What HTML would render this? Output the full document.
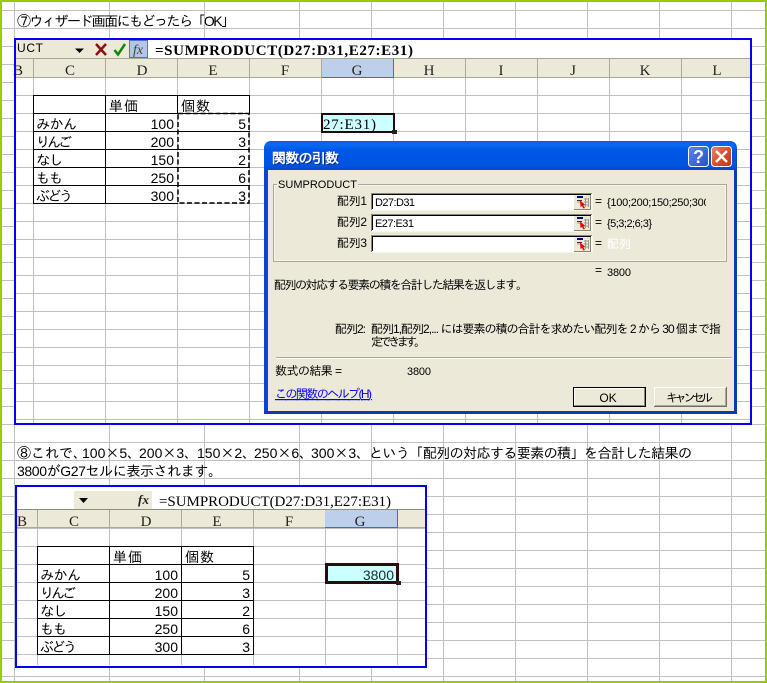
<!DOCTYPE html>
<html lang="ja">
<head>
<meta charset="utf-8">
<title>SUMPRODUCT</title>
<style>
html,body{margin:0;padding:0;background:#fff;width:767px;height:683px;overflow:hidden}
svg{display:block}
text{font-family:"Liberation Sans","IPAGothic","Noto Sans CJK JP",sans-serif;font-size:14px;fill:#000;dominant-baseline:auto}
.d{font-size:12px}
.l{font-size:11px}
.t{font-size:14px}
.s{font-family:"Liberation Serif","IPAGothic",serif}
.h{font-family:"Liberation Serif",serif;font-size:15px;text-anchor:middle;fill:#222}
.r{text-anchor:end}
.c{shape-rendering:crispEdges}
.w{font-family:"IPAGothic","Noto Sans CJK JP",sans-serif}
</style>
</head>
<body>
<svg xmlns="http://www.w3.org/2000/svg" width="767" height="683" viewBox="0 0 767 683">
<defs>
<pattern id="hl" patternUnits="userSpaceOnUse" x="0" y="10" width="10" height="18"><rect width="10" height="1" fill="#c0c0c0"/></pattern>
<pattern id="hl2" patternUnits="userSpaceOnUse" x="0" y="5" width="10" height="18"><rect width="10" height="1" fill="#c0c0c0"/></pattern>
<pattern id="hl3" patternUnits="userSpaceOnUse" x="0" y="6" width="10" height="18"><rect width="10" height="1" fill="#c0c0c0"/></pattern>
<linearGradient id="tb" x1="0" y1="0" x2="0" y2="1"><stop offset="0" stop-color="#0a5be0"/><stop offset=".12" stop-color="#0a6af0"/><stop offset=".3" stop-color="#0058e8"/><stop offset=".85" stop-color="#0054e0"/><stop offset="1" stop-color="#0048c8"/></linearGradient>
<linearGradient id="hb" x1="0" y1="0" x2="1" y2="1"><stop offset="0" stop-color="#5a86ee"/><stop offset="1" stop-color="#2450c8"/></linearGradient>
<linearGradient id="xb" x1="0" y1="0" x2="1" y2="1"><stop offset="0" stop-color="#e88a68"/><stop offset=".5" stop-color="#d8502c"/><stop offset="1" stop-color="#b83810"/></linearGradient>
<symbol id="ref" viewBox="0 0 17 15" width="17" height="15">
<rect width="17" height="15" fill="#ece9d8"/>
<path d="M0 14.500H17M16.500 0V15" stroke="#8a8674" fill="none"/>
<path d="M3 2H9" stroke="#00007a" stroke-width="2"/>
<path d="M3 7H8M10 4H14M10 7H14M10 10H14M11.500 3V12M14.500 3V12" stroke="#9a9a90" fill="none"/>
<path d="M3 5.500H8" stroke="#333"/>
<path d="M6 5.500L11 9.500L9.500 10.500L11 13L9.500 13.500L8 11L6.500 12Z" fill="#f00000"/>
</symbol>
</defs>

<!-- page background grid -->
<rect x="2" y="10" width="763" height="667" fill="url(#hl)" class="c"/>
<path class="c" d="M14.500 2V681M109.500 2V681M204.500 2V681M299.500 2V681M371.500 2V681M443.500 2V681M515.500 2V681M587.500 2V681M659.500 2V681M731.500 2V681" stroke="#c0c0c0" fill="none"/>
<rect x="0" y="0" width="767" height="2" fill="#99cc00" class="c"/>
<rect x="0" y="0" width="2" height="683" fill="#99cc00" class="c"/>
<rect x="765" y="0" width="2" height="683" fill="#99cc00" class="c"/>
<rect x="0" y="681" width="767" height="2" fill="#99cc00" class="c"/>

<text x="17" y="26" class="t" textLength="218">⑦ウィザード画面にもどったら「OK」</text>

<!-- BOX 1 -->
<rect x="15" y="39" width="736" height="385" fill="#fff" class="c"/>
<rect x="16" y="78" width="734" height="345" fill="url(#hl2)" class="c"/>
<path class="c" d="M33.500 78V423M105.500 78V423M177.500 78V423M249.500 78V423M321.500 78V423M393.500 78V423M465.500 78V423M537.500 78V423M609.500 78V423M681.500 78V423" stroke="#c0c0c0" fill="none"/>
<!-- formula bar -->
<rect x="16" y="40" width="734" height="18" fill="#ece9d8" class="c"/>
<rect x="148" y="40" width="602" height="18" fill="#fff" class="c"/>
<rect x="16" y="58" width="734" height="1" fill="#a8a595" class="c"/>
<text x="17" y="52" style="font-size:12px" textLength="26">UCT</text>
<path d="M75 48.500H84L79.500 53Z" fill="#000"/>
<path d="M96 44L106 55M106 44L96 55" stroke="#8c1010" stroke-width="2.500" fill="none"/>
<path d="M114.500 50L118 54.500L125 44" stroke="#0a8a0a" stroke-width="2.500" fill="none"/>
<rect x="129.500" y="40.500" width="18" height="17" fill="#b4c6e6" stroke="#4a78c8" class="c"/>
<text x="133" y="54" class="s" style="font-size:14px;font-style:italic;fill:#444">fx</text>
<text x="155" y="55" class="s" style="font-size:15px;font-weight:bold" textLength="258">=SUMPRODUCT(D27:D31,E27:E31)</text>
<!-- col header -->
<rect x="16" y="59" width="734" height="19" fill="#ece9d8" class="c"/>
<rect x="321" y="59" width="73" height="19" fill="#bdcfea" class="c"/>
<path class="c" d="M321 77.500H394M393.500 59V78" stroke="#3a6fc4" fill="none"/>
<path class="c" d="M16 77.500H321M394 77.500H750M33.500 59V78M105.500 59V78M177.500 59V78M249.500 59V78M321.500 59V78M465.500 59V78M537.500 59V78M609.500 59V78M681.500 59V78" stroke="#aca899" fill="none"/>
<text class="h" x="18" y="75">B</text><text class="h" x="70" y="75">C</text><text class="h" x="142" y="75">D</text><text class="h" x="213" y="75">E</text><text class="h" x="285" y="75">F</text><text class="h" x="357" y="75">G</text><text class="h" x="429" y="75">H</text><text class="h" x="501" y="75">I</text><text class="h" x="573" y="75">J</text><text class="h" x="645" y="75">K</text><text class="h" x="717" y="75">L</text>
<!-- table 1 -->
<path class="c" d="M33 95.500H250M33 113.500H250M33 131.500H250M33 149.500H250M33 167.500H250M33 185.500H178M33 203.500H178M33.500 95V204M105.500 95V204M177.500 95V114M249.500 95V114" stroke="#000" fill="none"/>
<path class="c" d="M178 185.500H250" stroke="#000" fill="none"/>
<rect x="178" y="113.500" width="71" height="89.500" fill="none" stroke="#000" stroke-width="1.500" stroke-dasharray="5 2.500"/>
<g>
<text x="109" y="111" textLength="29">単価</text><text x="181" y="111" textLength="29">個数</text>
<text x="36" y="129" textLength="41">みかん</text><text x="36" y="147" textLength="36">りんご</text><text x="36" y="165" textLength="27">なし</text><text x="36" y="183" textLength="27">もも</text><text x="36" y="201" textLength="37">ぶどう</text>
<text class="r" x="174" y="129">100</text><text class="r" x="174" y="147">200</text><text class="r" x="174" y="165">150</text><text class="r" x="174" y="183">250</text><text class="r" x="174" y="201">300</text>
<text class="r" x="246" y="129">5</text><text class="r" x="246" y="147">3</text><text class="r" x="246" y="165">2</text><text class="r" x="246" y="183">6</text><text class="r" x="246" y="201">3</text>
</g>
<rect x="322" y="114" width="72" height="18" fill="#ccffff" stroke="#200808" stroke-width="2" class="c"/>
<rect x="392" y="130" width="5" height="4" fill="#222" class="c"/>
<text x="323" y="129" class="s" style="font-size:15px" textLength="53">27:E31)</text>

<!-- blue frame 1 -->
<rect x="15" y="39" width="736" height="385" fill="none" stroke="#0000ff" stroke-width="2" class="c"/>

<!-- DIALOG -->
<path d="M264 414V149Q264 141 272 141H729Q737 141 737 149V414Z" fill="#0848d0"/>
<path d="M733 170H737V414H264V411H733Z" fill="#0a3cb0"/>
<path d="M264 170V149Q264 141 272 141H729Q736 141 736 149V170Z" fill="url(#tb)"/>
<rect x="268" y="170" width="466" height="241" fill="#ece9d8" class="c"/>
<text x="272" y="163" style="font-size:14px;font-weight:bold;fill:#0a2a90" textLength="67" transform="translate(1 1)">関数の引数</text>
<text x="272" y="163" style="font-size:14px;font-weight:bold;fill:#fff" textLength="67">関数の引数</text>
<rect x="688.500" y="146.500" width="20" height="20" rx="3" fill="url(#hb)" stroke="#fff"/>
<text x="698.500" y="163" style="font-size:18px;font-weight:bold;fill:#fff;text-anchor:middle">?</text>
<rect x="711.500" y="146.500" width="20" height="20" rx="3" fill="url(#xb)" stroke="#fff"/>
<path d="M716 151L727 162M727 151L716 162" stroke="#fff" stroke-width="2.500" fill="none"/>

<!-- group box -->
<rect x="273.500" y="184.500" width="453" height="77" fill="none" stroke="#aca899" class="c"/>
<rect x="274.500" y="185.500" width="451" height="75" fill="none" stroke="#f6f4ec" class="c"/>
<rect x="277" y="178" width="81" height="10" fill="#ece9d8" class="c"/>
<text x="278" y="188" class="l" textLength="79">SUMPRODUCT</text>

<text x="337" y="205" class="d" textLength="30">配列1</text>
<text x="337" y="226" class="d" textLength="30">配列2</text>
<text x="337" y="247" class="d" textLength="30">配列3</text>

<g class="c">
<rect x="371.500" y="193.500" width="221" height="17" fill="#fff" stroke="#f6f4ec"/><path d="M371.500 210V193.500H592" stroke="#8a8674" fill="none"/><path d="M372.500 209V194.500H591" stroke="#000" fill="none"/>
<rect x="371.500" y="214.500" width="221" height="17" fill="#fff" stroke="#f6f4ec"/><path d="M371.500 231V214.500H592" stroke="#8a8674" fill="none"/><path d="M372.500 230V215.500H591" stroke="#000" fill="none"/>
<rect x="371.500" y="235.500" width="221" height="17" fill="#fff" stroke="#f6f4ec"/><path d="M371.500 252V235.500H592" stroke="#8a8674" fill="none"/><path d="M372.500 251V236.500H591" stroke="#000" fill="none"/>
</g>
<use href="#ref" x="574" y="195"/><use href="#ref" x="574" y="216"/><use href="#ref" x="574" y="237"/>
<text x="375" y="206" class="l" textLength="40">D27:D31</text>
<text x="375" y="227" class="l" textLength="39">E27:E31</text>

<text x="595" y="205" class="d">=</text><text x="595" y="226" class="d">=</text><text x="595" y="247" class="d">=</text><text x="595" y="274" class="d">=</text>
<svg x="607" y="190" width="99" height="22"><text x="0" y="16" class="l" textLength="106">{100;200;150;250;300}</text></svg>
<text x="607" y="227" class="l" textLength="45">{5;3;2;6;3}</text>
<text x="607" y="248" class="d" style="fill:#fff" textLength="24">配列</text>
<text x="607" y="276" class="l" textLength="24">3800</text>

<text x="274" y="289" class="d" textLength="254">配列の対応する要素の積を合計した結果を返します。</text>
<text x="335" y="333" class="d" textLength="31">配列2:</text>
<text x="371" y="333" class="d" textLength="350">配列1,配列2,... には要素の積の合計を求めたい配列を 2 から 30 個まで指</text>
<text x="371" y="346" class="d" textLength="55">定できます。</text>
<path class="c" d="M276 357.500H732" stroke="#aca899"/><path class="c" d="M276 358.500H732" stroke="#fff"/>
<text x="275" y="375" class="d" textLength="67">数式の結果 =</text>
<text x="407" y="375" class="l" textLength="24">3800</text>
<text x="275" y="398" class="d" style="fill:#0000ff;text-decoration:underline" textLength="97">この関数のヘルプ(H)</text>

<g class="c">
<rect x="573.500" y="387.500" width="72" height="19" fill="#ece9d8" stroke="#000"/>
<path d="M574.500 405V388.500H645" stroke="#fff" fill="none"/><path d="M574.500 405.500H644.500V388" stroke="#8a8674" fill="none"/>
<rect x="654" y="387" width="73" height="20" fill="#ece9d8"/>
<path d="M654.500 406V387.500H727" stroke="#fff" fill="none"/><path d="M654 406.500H726.500V387" stroke="#716f64" fill="none"/><path d="M655 405.500H725.500V388" stroke="#aca899" fill="none"/>
</g>
<text x="608" y="402" class="d" style="text-anchor:middle">OK</text>
<text x="666" y="402" class="d" textLength="47">キャンセル</text>

<!-- step 8 text -->
<text y="458" class="t"><tspan x="17">⑧これで、</tspan><tspan x="82">100<tspan class="w">×</tspan>5、</tspan><tspan x="139">200<tspan class="w">×</tspan>3、</tspan><tspan x="197">150<tspan class="w">×</tspan>2、</tspan><tspan x="254">250<tspan class="w">×</tspan>6、</tspan><tspan x="311">300<tspan class="w">×</tspan>3、</tspan></text>
<text x="369" y="458" class="t" textLength="323">という「配列の対応する要素の積」を合計した結果の</text>
<text x="17" y="476" class="t" textLength="205">3800がG27セルに表示されます。</text>

<!-- BOX 2 -->
<rect x="16" y="486" width="410" height="181" fill="#fff" class="c"/>
<rect x="17" y="528" width="408" height="137" fill="url(#hl3)" class="c"/>
<path class="c" d="M37.500 528V665M109.500 528V665M181.500 528V665M253.500 528V665M325.500 528V665M397.500 528V665" stroke="#c0c0c0" fill="none"/>
<rect x="74" y="491" width="78" height="18" fill="#ece9d8" class="c"/>
<path d="M79 498H88L83.500 503Z" fill="#000"/>
<text x="138" y="504" class="s" style="font-size:13px;font-style:italic;font-weight:bold;fill:#222" textLength="11">fx</text>
<text x="159" y="506" class="s" style="font-size:15px" textLength="232">=SUMPRODUCT(D27:D31,E27:E31)</text>
<rect x="17" y="509" width="408" height="1" fill="#8f8d80" class="c"/>
<rect x="17" y="510" width="408" height="18" fill="#ece9d8" class="c"/>
<rect x="325" y="510" width="73" height="18" fill="#bdcfea" class="c"/>
<path class="c" d="M17 527.500H325M398 527.500H425M37.500 510V528M109.500 510V528M181.500 510V528M253.500 510V528" stroke="#aca899" fill="none"/>
<path class="c" d="M325 527.500H398M397.500 510V528" stroke="#3a6fc4" fill="none"/>
<text class="h" x="22" y="526">B</text><text class="h" x="74" y="526">C</text><text class="h" x="146" y="526">D</text><text class="h" x="217" y="526">E</text><text class="h" x="289" y="526">F</text><text class="h" x="360" y="526">G</text>
<path class="c" d="M37 546.500H254M37 564.500H254M37 582.500H254M37 600.500H254M37 618.500H254M37 636.500H254M37 654.500H254M37.500 546V655M109.500 546V655M181.500 546V655M253.500 546V655" stroke="#000" fill="none"/>
<text x="113" y="562" textLength="29">単価</text><text x="185" y="562" textLength="29">個数</text>
<text x="40" y="580" textLength="41">みかん</text><text x="40" y="598" textLength="36">りんご</text><text x="40" y="616" textLength="27">なし</text><text x="40" y="634" textLength="27">もも</text><text x="40" y="652" textLength="37">ぶどう</text>
<text class="r" x="178" y="580">100</text><text class="r" x="178" y="598">200</text><text class="r" x="178" y="616">150</text><text class="r" x="178" y="634">250</text><text class="r" x="178" y="652">300</text>
<text class="r" x="250" y="580">5</text><text class="r" x="250" y="598">3</text><text class="r" x="250" y="616">2</text><text class="r" x="250" y="634">6</text><text class="r" x="250" y="652">3</text>
<rect x="326.500" y="564.500" width="71" height="18" fill="#ccffff" stroke="#300a0a" stroke-width="3" class="c"/>
<rect x="396" y="581" width="5" height="4" fill="#222" class="c"/>
<text class="r" x="394" y="580" style="fill:#103030">3800</text>
<rect x="16" y="486" width="410" height="181" fill="none" stroke="#0000ff" stroke-width="2" class="c"/>
</svg>
</body>
</html>
